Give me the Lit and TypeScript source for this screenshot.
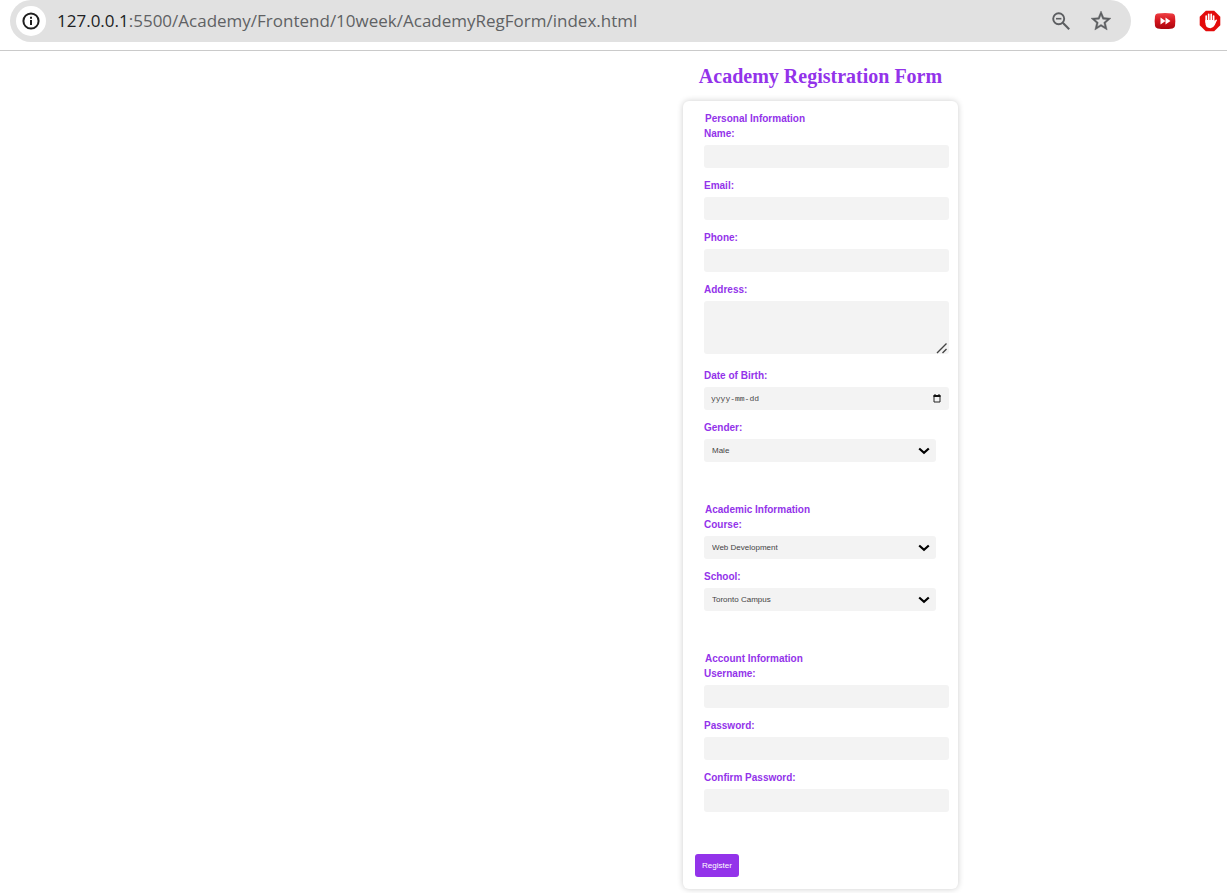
import { LitElement, html, css, svg } from "lit";
import { customElement } from "lit/decorators.js";

interface Field {
  id: string;
  label: string;
  kind: "text" | "email" | "tel" | "password" | "area" | "date" | "select";
  options?: string[];
}

interface Section {
  title: string;
  fields: Field[];
}

const SECTIONS: Section[] = [
  {
    title: "Personal Information",
    fields: [
      { id: "name", label: "Name:", kind: "text" },
      { id: "email", label: "Email:", kind: "email" },
      { id: "phone", label: "Phone:", kind: "tel" },
      { id: "address", label: "Address:", kind: "area" },
      { id: "dob", label: "Date of Birth:", kind: "date" },
      { id: "gender", label: "Gender:", kind: "select", options: ["Male"] },
    ],
  },
  {
    title: "Academic Information",
    fields: [
      { id: "course", label: "Course:", kind: "select", options: ["Web Development"] },
      { id: "school", label: "School:", kind: "select", options: ["Toronto Campus"] },
    ],
  },
  {
    title: "Account Information",
    fields: [
      { id: "username", label: "Username:", kind: "text" },
      { id: "password", label: "Password:", kind: "password" },
      { id: "confirm", label: "Confirm Password:", kind: "password" },
    ],
  },
];

@customElement("browser-bar")
export class BrowserBar extends LitElement {
  static styles = css`
    :host {
      display: block;
      border-bottom: 1px solid #cacaca;
    }
    .bar {
      display: flex;
      align-items: center;
      height: 42px;
      padding: 0 6px 8px 10px;
    }
    .omnibox {
      flex: 1;
      min-width: 0;
      display: flex;
      align-items: center;
      height: 42px;
      box-sizing: border-box;
      padding: 0 18px 0 6px;
      border-radius: 21px;
      background: #e1e1e1;
    }
    button {
      display: grid;
      place-items: center;
      flex: none;
      padding: 0;
      border: 0;
      background: none;
    }
    .info {
      width: 30px;
      height: 30px;
      border-radius: 50%;
      background: #fff;
    }
    .url {
      flex: 1;
      min-width: 0;
      overflow: hidden;
      margin-left: 11px;
      font: 17px/26px "Open Sans", "Noto Sans", sans-serif;
      color: #5f6164;
      white-space: nowrap;
    }
    .host {
      color: #202124;
    }
    .tool {
      width: 24px;
      height: 24px;
      margin-left: 16px;
    }
    .extension {
      width: 22px;
      height: 24px;
      margin-left: 23px;
    }
  `;

  render() {
    return html`
      <div class="bar">
        <div class="omnibox">
          <button class="info" aria-label="Site information">
            <svg width="18" height="18" viewBox="0 0 18 18" fill="none" stroke="#1f1f1f" stroke-width="2">
              <circle cx="9" cy="9" r="7.6" />
              <path d="M9 8v5M9 4.8v2" />
            </svg>
          </button>
          <div class="url"><span class="host">127.0.0.1</span>:5500/Academy/Frontend/10week/AcademyRegForm/index.html</div>
          <button class="tool" aria-label="Zoom">
            <svg width="20" height="20" viewBox="0 0 20 20" fill="none" stroke="#5c5e61">
              <circle cx="7.7" cy="7.7" r="5.5" stroke-width="1.9" />
              <path d="M11.8 11.8l6.4 6.4" stroke-width="2.1" />
              <path d="M5 7.7h5.4" stroke-width="1.6" />
            </svg>
          </button>
          <button class="tool" aria-label="Bookmark">
            <svg width="24" height="24" viewBox="0 0 24 24" fill="#5c5e61" stroke="#5c5e61" stroke-width=".4">
              <path
                d="M22 9.24l-7.19-.62L12 2 9.19 8.63 2 9.24l5.46 4.73L5.82 21 12 17.27 18.18 21l-1.63-7.03L22 9.24zM12 15.4l-3.76 2.27 1-4.28-3.32-2.88 4.38-.38L12 6.1l1.71 4.04 4.38.38-3.32 2.88 1 4.28L12 15.4z"
              />
            </svg>
          </button>
        </div>
        <button class="extension" aria-label="Video speed">
          <svg width="22" height="18" viewBox="0 0 22 18">
            <defs>
              <linearGradient id="red" x1="0" y1="0" x2="0" y2="1">
                <stop offset="0" stop-color="#ef4146" />
                <stop offset=".5" stop-color="#d3141c" />
                <stop offset="1" stop-color="#a90710" />
              </linearGradient>
            </defs>
            <path d="M3.5 1.6Q11 .2 18.5 1.6Q20.6 2 21 4Q21.7 9 21 14Q20.6 16 18.5 16.4Q11 17.8 3.5 16.4Q1.4 16 1 14Q.3 9 1 4Q1.4 2 3.5 1.6Z" fill="url(#red)" />
            <path d="M6.5 5.5l5 3.5-5 3.5zM11.5 5.5l5 3.5-5 3.5z" fill="#fff" />
          </svg>
        </button>
        <button class="extension" aria-label="Ad blocker">
          <svg width="22" height="22" viewBox="0 0 22 22">
            <path d="M6.8.7h8.4l6.1 6.1v8.4l-6.1 6.1H6.8L.7 15.2V6.8z" fill="#e30b0b" />
            <path
              d="M7.2 12V6.1M9.7 11V4.3M12.2 11V4.3M14.6 12V6"
              stroke="#fff" stroke-width="1.7" stroke-linecap="round"
            />
            <path
              d="M6.4 10h9v1.5l1.1-1.6q1-.9 1.6.1l-2.3 5q-1.5 3-4.3 3.200-5.1 0-5.1-5.2z"
              fill="#fff"
            />
          </svg>
        </button>
      </div>
    `;
  }
}

@customElement("app-root")
export class AppRoot extends LitElement {
  static styles = css`
    :host {
      display: block;
      min-height: 100vh;
      background: #fff;
    }
    .page {
      display: grid;
      grid-template-columns: 683fr 275px 269fr;
      padding-bottom: 4px;
    }
    .column {
      grid-column: 2;
      display: flex;
      flex-direction: column;
    }
    h1 {
      align-self: center;
      margin: 13px 0;
      font: bold 20px/24px "Liberation Serif", serif;
      color: #9333ea;
      white-space: nowrap;
    }
    form {
      padding: 12px 9px 12px 12px;
      border-radius: 6px;
      background: #fff;
      box-shadow: 0 0 6px rgba(0, 0, 0, 0.2);
      font-family: "Liberation Sans", Arial, sans-serif;
    }
    fieldset {
      min-width: 0;
      margin: 0 0 42px;
      padding: 0 0 0 9px;
      border: 0;
    }
    legend {
      padding: 0 1px;
      margin-bottom: 3px;
      font-size: 10px;
      font-weight: bold;
      line-height: 12px;
      color: #9333ea;
    }
    .fields {
      display: grid;
      gap: 12px;
    }
    label {
      display: block;
      margin-bottom: 5px;
      font-size: 10px;
      font-weight: bold;
      line-height: 12px;
      color: #9333ea;
    }
    .control {
      display: grid;
      align-items: center;
    }
    .control > * {
      grid-area: 1 / 1;
    }
    .narrow {
      margin-right: 13px;
    }
    .tall {
      margin-bottom: 4px;
    }
    input,
    select,
    textarea {
      appearance: none;
      box-sizing: border-box;
      width: 100%;
      height: 23px;
      margin: 0;
      padding: 0 8px;
      border: 0;
      border-radius: 3px;
      background: #f3f3f3;
      color: #444;
      font: 8px/12px "Liberation Sans", Arial, sans-serif;
    }
    textarea {
      height: 53px;
      padding: 6px 8px;
      resize: none;
    }
    .date {
      padding: 0 7px;
      font-family: "Liberation Mono", monospace;
    }
    .date::placeholder {
      color: #444;
      opacity: 1;
    }
    svg {
      justify-self: end;
      pointer-events: none;
    }
    .chevron {
      margin-right: 6px;
    }
    .calendar {
      margin-right: 8px;
    }
    .grip {
      align-self: end;
      margin: 0 1px 0 0;
    }
    button {
      display: block;
      height: 23px;
      margin: 0;
      padding: 0 7px;
      border: 0;
      border-radius: 3px;
      background: #9333ea;
      color: #fff;
      font: 8px/12px "Liberation Sans", Arial, sans-serif;
    }
  `;

  private control(field: Field) {
    switch (field.kind) {
      case "area":
        return html`<div class="control tall">
          <textarea id=${field.id}></textarea>
          <svg class="grip" width="12" height="12" viewBox="0 0 12 12" stroke="#444" stroke-width="1.4">
            ${svg`<path d="M1 11L10.500 1.500M6.500 11L10.500 7" />`}
          </svg>
        </div>`;
      case "date":
        return html`<div class="control">
          <input class="date" id=${field.id} type="text" placeholder="yyyy-mm-dd" />
          <svg class="calendar" width="8" height="9" viewBox="0 0 8 9">
            ${svg`<path d="M1 1.500h6v6.500H1z" fill="none" stroke="#222" /><path d="M.5 1h7v2h-7zM1.500 0h1v1h-1zM5.500 0h1v1h-1z" fill="#111" />`}
          </svg>
        </div>`;
      case "select":
        return html`<div class="control narrow">
          <select id=${field.id}>
            ${field.options?.map((o) => html`<option>${o}</option>`)}
          </select>
          <svg class="chevron" width="12" height="8" viewBox="0 0 12 8" fill="none" stroke="#000" stroke-width="2.2">
            ${svg`<path d="M1.200 1.500L6 5.800L10.800 1.500" />`}
          </svg>
        </div>`;
      default:
        return html`<div class="control"><input id=${field.id} type=${field.kind} /></div>`;
    }
  }

  render() {
    return html`
      <browser-bar></browser-bar>
      <main class="page">
        <div class="column">
          <h1>Academy Registration Form</h1>
          <form @submit=${(e: Event) => e.preventDefault()}>
            ${SECTIONS.map(
              (section) => html`<fieldset>
                <legend>${section.title}</legend>
                <div class="fields">
                  ${section.fields.map(
                    (field) => html`<div>
                      <label for=${field.id}>${field.label}</label>
                      ${this.control(field)}
                    </div>`
                  )}
                </div>
              </fieldset>`
            )}
            <button type="submit">Register</button>
          </form>
        </div>
      </main>
    `;
  }
}
